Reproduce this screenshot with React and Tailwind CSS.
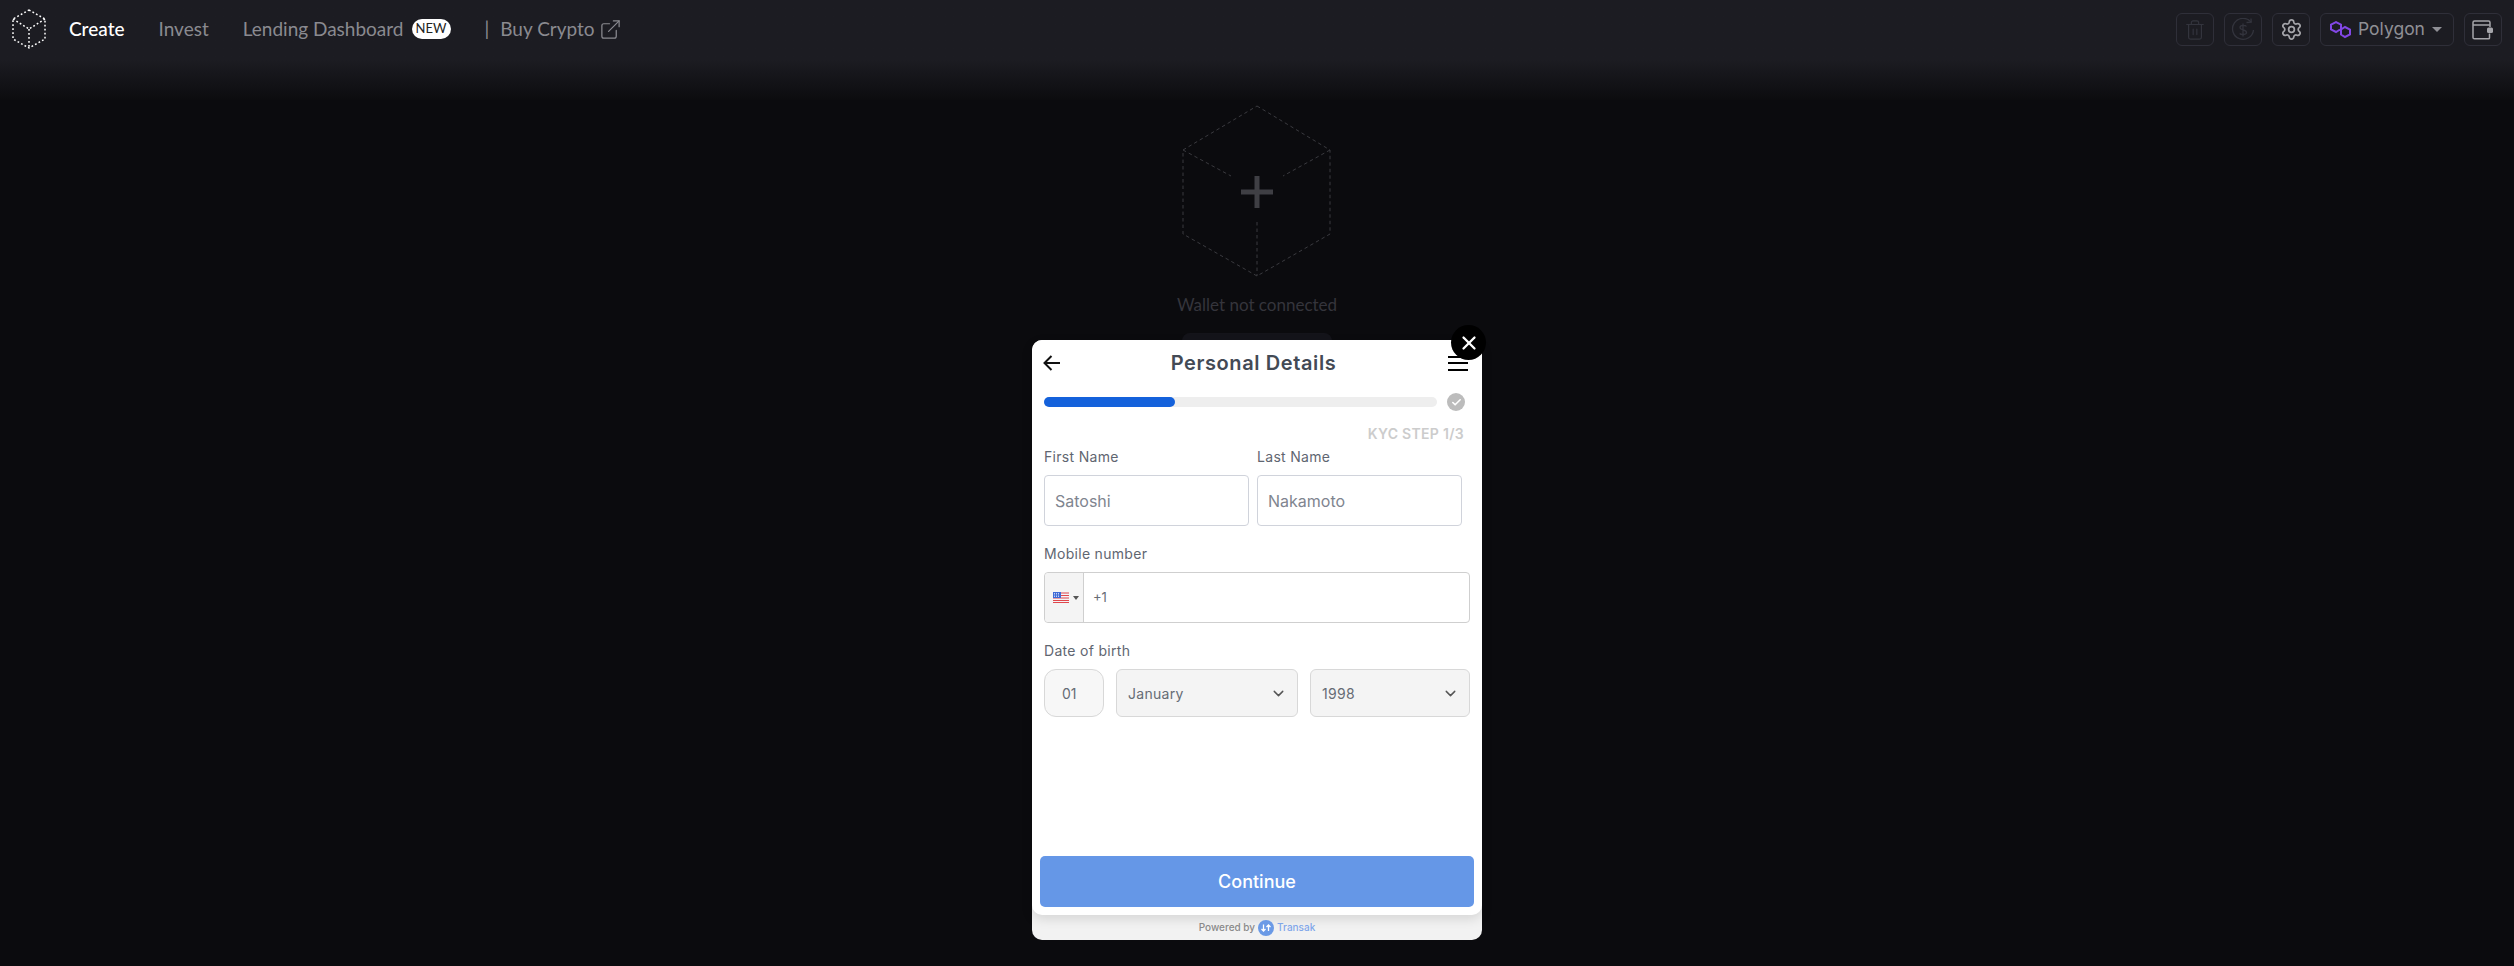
import React from "react";
import { Check, ChevronDown, ExternalLink, Settings, Trash2, X } from "lucide-react";

const navFont = "font-['Lato',sans-serif]";

const CubeLogo = () => (
  <svg width="36" height="40" viewBox="0 0 36 40" fill="none" stroke="#fff" strokeWidth="1.500" strokeDasharray="1.800 2.200">
    <path d="M18 1 L34 10 V30 L18 39 L2 30 V10 Z" />
    <path d="M2 10 L18 20 L34 10 M18 20 V39" />
  </svg>
);

const EmptyCube = () => (
  <svg width="150" height="174" viewBox="0 0 150 174" fill="none">
    <g stroke="#3a3a3f" strokeWidth="1" strokeDasharray="3.500 3">
      <path d="M75 1 L148 45 V129 L75 171 L1 129 V45 Z" />
      <path d="M1 45 L49 71 M148 45 L101 71 M75 117 V171" />
    </g>
    <path d="M59 87 H91 M75 71 V103" stroke="#3f3f44" strokeWidth="5" />
  </svg>
);

const PolygonIcon = () => (
  <svg width="23" height="19" viewBox="0 0 23 19" fill="none" stroke="#8247e5" strokeWidth="2">
    <path d="M11 9.500 L7 12 L2 9.500 V4.500 L7 2 L12 4.500 V14.500 L16 17 L21 14.500 V9.500 L16 7 L12 9.500" />
  </svg>
);

const DollarRefresh = () => (
  <svg width="24" height="24" viewBox="0 0 24 24" fill="none" stroke="#33343d" strokeWidth="1.300">
    <path d="M20 4 A10.500 10.500 0 1 0 22.500 12" />
    <path d="M15.500 4.500 L20.200 4.200 L20 0.500" />
    <path d="M15.500 8.500 C14.500 7 9 6.800 9 9.500 C9 12.500 15.500 11 15.500 14.500 C15.500 17 10 17 8.700 15.500 M12 5.500 V18.500" />
  </svg>
);

const WalletIcon = () => (
  <svg width="22" height="20" viewBox="0 0 22 20" fill="none" stroke="#a5a5aa" strokeWidth="1.500">
    <path d="M17.500 13.500 V18 Q17.500 18.800 16.500 18.800 H2.500 Q1 18.800 1 17.500 V2.500 Q1 1 2.500 1 H16.500 Q18 1 18 2.500 V7" />
    <path d="M1 5 H18" />
    <rect x="15" y="7.500" width="6" height="5.500" rx="1.500" fill="#a5a5aa" stroke="none" />
  </svg>
);

const UsFlag = () => (
  <svg width="16" height="11" viewBox="0 0 16 11">
    <rect width="16" height="11" fill="#f3f3f6" />
    <path d="M0 1 H16 M0 3.500 H16 M0 6 H16 M0 8.500 H16 M0 10.500 H16" stroke="#e0474c" strokeWidth="1.200" />
    <rect width="8" height="6" fill="#3f6bd6" />
    <path d="M1 1.500 H7 M1 3 H7 M1 4.500 H7" stroke="#fff" strokeWidth="0.700" strokeDasharray="1 1" />
  </svg>
);

const TransakLogo = () => (
  <svg width="16" height="16" viewBox="0 0 16 16" fill="none">
    <circle cx="8" cy="8" r="8" fill="#6b9ae6" />
    <path d="M5.500 4.500 V11 M3.500 9 L5.500 11 L7.500 9 M10.500 11 V5 M8.500 7 L10.500 5 L12.500 7" stroke="#fff" strokeWidth="1.300" />
  </svg>
);

const IconButton = ({ children }) => (
  <div className="w-[38px] h-[33px] flex items-center justify-center rounded-md border border-[#2f2f39]">
    {children}
  </div>
);

const Label = ({ children }) => (
  <div className="text-[14px] leading-[18px] tracking-[0.3px] text-[#5f6671]">{children}</div>
);

const TextField = ({ value }) => (
  <div className="w-[205px] h-[51px] mt-[9px] flex items-center pl-[10px] rounded border border-[#d0d3db] text-[16px] text-[#7f858f]">
    {value}
  </div>
);

const SelectField = ({ value, width }) => (
  <div className={`${width} h-[48px] flex items-center justify-between pl-[11px] pr-[10px] rounded-md border border-[#d8d8d8] bg-[#f4f4f4] text-[14px] tracking-[0.3px] text-[#666c75]`}>
    {value}
    <ChevronDown size={17} color="#555" />
  </div>
);

const App = () => {
  return (
    <div className="relative w-full h-screen overflow-hidden bg-[#0b0b0e]">
      <header className={`h-[100px] pl-[11px] pr-[10px] pt-[9px] flex items-start justify-between bg-gradient-to-b from-[#1c1c22] from-60% to-[#0c0c0f] ${navFont}`}>
        <div className="flex items-center h-[40px] text-[19px] text-[#8a8a90]">
          <CubeLogo />
          <span className="ml-[22px] font-medium text-white">Create</span>
          <span className="ml-[34px]">Invest</span>
          <span className="ml-[34px]">Lending Dashboard</span>
          <span className="ml-[8px] w-[39px] h-[20px] flex items-center justify-center rounded-full bg-white text-[13px] text-[#222]">NEW</span>
          <span className="ml-[34px]">|</span>
          <span className="ml-[11px]">Buy Crypto</span>
          <ExternalLink size={23} strokeWidth={1.300} className="ml-[4px]" />
        </div>
        <div className="flex items-center gap-[10px] mt-[4px] mr-[2px]">
          <IconButton><Trash2 size={22} color="#33343d" strokeWidth={1.300} /></IconButton>
          <IconButton><DollarRefresh /></IconButton>
          <IconButton><Settings size={23} color="#a5a5aa" strokeWidth={1.800} /></IconButton>
          <div className="w-[134px] h-[33px] flex items-center pl-[8px] rounded-md border border-[#2f2f39] font-['Inter',sans-serif] text-[17.500px] text-[#8f8f95]">
            <PolygonIcon />
            <span className="ml-[6px]">Polygon</span>
            <span className="ml-[7px] border-x-[5px] border-t-[5px] border-x-transparent border-t-[#8f8f95]" />
          </div>
          <IconButton><WalletIcon /></IconButton>
        </div>
      </header>

      <main className={`flex flex-col items-center mt-[5px] ${navFont}`}>
        <EmptyCube />
        <div className="mt-[14px] text-[17px] leading-[24px] text-[#35353c]">Wallet not connected</div>
        <div className="mt-[16px] w-[150px] h-[40px] rounded-lg bg-[#14141a]" />
      </main>

      {/* kyc popup */}
      <div className="absolute left-[1032px] top-[340px] w-[450px] h-[600px] flex flex-col rounded-[10px] bg-[#f2f2f2] font-['Inter',sans-serif]">
        <div className="h-[575px] flex flex-col rounded-[10px] bg-white shadow-[0_4px_12px_rgba(0,0,0,0.12)]">
          <div className="h-[46px] flex items-center justify-between pl-[10px] pr-[14px]">
            <svg width="20" height="18" viewBox="0 0 20 18" fill="none" stroke="#111" strokeWidth="2">
              <path d="M18 9 H3 M9.500 2 L2.500 9 L9.500 16" />
            </svg>
            <span className="-ml-[3px] text-[20px] font-semibold tracking-[0.6px] text-[#434a55]">Personal Details</span>
            <div className="w-[20px] h-[15px] flex flex-col justify-between">
              <div className="h-[2px] bg-black" />
              <div className="h-[2px] bg-black" />
              <div className="h-[2px] bg-black" />
            </div>
          </div>

          <div className="mt-[7px] ml-[12px] mr-[17px] flex items-center justify-between">
            <div className="w-[393px] h-[10px] rounded-full bg-[#eeeeee]">
              <div className="w-[131px] h-full rounded-full bg-[#1461db]" />
            </div>
            <div className="w-[18px] h-[18px] flex items-center justify-center rounded-full bg-[#bcbcbc]">
              <Check size={11} color="#fff" strokeWidth={3.500} />
            </div>
          </div>

          <div className="mt-[14px] mr-[18px] text-right text-[14px] leading-[18px] font-semibold tracking-[0.3px] text-[#cccccc]">KYC STEP 1/3</div>

          <div className="mt-[5px] ml-[12px] flex gap-[8px]">
            <div>
              <Label>First Name</Label>
              <TextField value="Satoshi" />
            </div>
            <div>
              <Label>Last Name</Label>
              <TextField value="Nakamoto" />
            </div>
          </div>

          <div className="mt-[19px] mx-[12px]">
            <Label>Mobile number</Label>
            <div className="h-[51px] mt-[9px] flex rounded border border-[#cfcfcf]">
              <div className="w-[39px] flex items-center pl-[8px] gap-[4px] rounded-l border-r border-[#cfcfcf] bg-[#f4f4f4]">
                <UsFlag />
                <span className="border-x-[3px] border-t-[4px] border-x-transparent border-t-[#555]" />
              </div>
              <div className="flex items-center pl-[9px] text-[13px] text-[#666c75]">+1</div>
            </div>
          </div>

          <div className="mt-[19px] mx-[12px]">
            <Label>Date of birth</Label>
            <div className="mt-[9px] flex gap-[12px]">
              <div className="w-[60px] h-[48px] flex items-center pl-[17px] rounded-xl border border-[#d8d8d8] bg-[#f7f7f7] text-[14px] text-[#666c75]">01</div>
              <SelectField value="January" width="w-[182px]" />
              <SelectField value="1998" width="w-[160px]" />
            </div>
          </div>

          <div className="mt-auto mb-[8px] mx-[8px] h-[51px] flex items-center justify-center rounded-[5px] bg-[#6597e7] text-[18px] font-medium text-white">
            Continue
          </div>
        </div>
        <div className="flex-1 flex items-center justify-center text-[10px] font-medium text-[#8a8a8a]">
          Powered by
          <span className="mx-[3px]"><TransakLogo /></span>
          <span className="text-[#7fa6ea]">Transak</span>
        </div>

        <div className="absolute -top-[15px] right-[-4px] w-[35px] h-[35px] flex items-center justify-center rounded-full bg-black">
          <X size={22} color="#fff" strokeWidth={2.500} />
        </div>
      </div>
    </div>
  );
};

export default App;
